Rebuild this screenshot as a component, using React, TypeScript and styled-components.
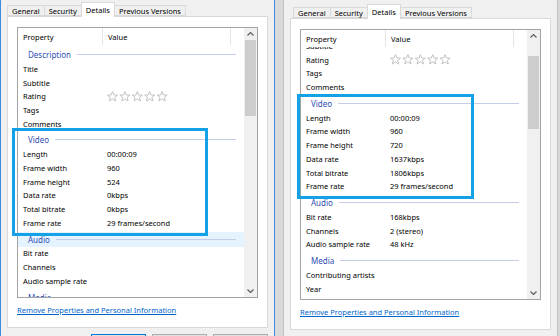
import React from 'react';
import styled, { createGlobalStyle } from 'styled-components';

type Item =
    | { kind: 'group'; label: string; hover?: boolean }
    | { kind: 'row'; name: string; value?: string; stars?: boolean };

interface DialogProps {
    items: Item[];
    edge: string;
    top: number;
    tabInset: number;
    scroll: number;
    thumbTop: number;
    thumbHeight: number;
    callout: { x: number; y: number; w: number; h: number };
}

const row = (name: string, value?: string): Item => ({ kind: 'row', name, value });
const group = (label: string, hover?: boolean): Item => ({ kind: 'group', label, hover });

const leftItems: Item[] = [
    group('Description'),
    row('Title'),
    row('Subtitle'),
    { kind: 'row', name: 'Rating', stars: true },
    row('Tags'),
    row('Comments'),
    group('Video'),
    row('Length', '00:00:09'),
    row('Frame width', '960'),
    row('Frame height', '524'),
    row('Data rate', '0kbps'),
    row('Total bitrate', '0kbps'),
    row('Frame rate', '29 frames/second'),
    group('Audio', true),
    row('Bit rate'),
    row('Channels'),
    row('Audio sample rate'),
    group('Media'),
    row('Contributing artists'),
    row('Year'),
];

const rightItems: Item[] = [
    group('Description'),
    row('Title'),
    row('Subtitle'),
    { kind: 'row', name: 'Rating', stars: true },
    row('Tags'),
    row('Comments'),
    group('Video'),
    row('Length', '00:00:09'),
    row('Frame width', '960'),
    row('Frame height', '720'),
    row('Data rate', '1637kbps'),
    row('Total bitrate', '1806kbps'),
    row('Frame rate', '29 frames/second'),
    group('Audio'),
    row('Bit rate', '168kbps'),
    row('Channels', '2 (stereo)'),
    row('Audio sample rate', '48 kHz'),
    group('Media'),
    row('Contributing artists'),
    row('Year'),
];

const Stars = () => (
    <svg width="62" height="11" viewBox="0 0 62 11">
        {[0, 1, 2, 3, 4].map((i) => (
            <polygon
                key={i}
                transform={`translate(${i * 12.4},0)`}
                points="5.5,0.6 6.9,4 10.5,4.1 7.7,6.4 8.7,10 5.5,7.9 2.3,10 3.3,6.4 0.5,4.1 4.1,4"
                fill="#fff"
                stroke="#b4b4b4"
                strokeWidth="0.8"
            />
        ))}
    </svg>
);

const Chevron: React.FC<{ down?: boolean }> = ({ down }) => (
    <svg width="7" height="4" viewBox="0 0 7 4">
        <polyline
            points={down ? '0.5,0.5 3.5,3.5 6.5,0.5' : '0.5,3.5 3.5,0.5 6.5,3.5'}
            fill="none"
            stroke="#606060"
            strokeWidth="1.2"
        />
    </svg>
);

const Dialog: React.FC<DialogProps> = ({ items, edge, top, tabInset, scroll, thumbTop, thumbHeight, callout }) => {
    return (
        <Window $edge={edge} $top={top}>
            <TabStrip $inset={tabInset}>
                <Tab>General</Tab>
                <Tab>Security</Tab>
                <Tab $active>Details</Tab>
                <Tab>Previous Versions</Tab>
            </TabStrip>
            <Panel>
                <ListBox>
                    <ListMain>
                        <HeaderRow>
                            <HeaderCell $w={85}>Property</HeaderCell>
                            <HeaderCell $w={128}>Value</HeaderCell>
                            <HeaderFill />
                        </HeaderRow>
                        <Viewport>
                            <Content $scroll={scroll}>
                                {items.map((item, i) =>
                                    item.kind === 'group' ? (
                                        <GroupRow key={i} $hover={item.hover}>
                                            <GroupLabel>{item.label}</GroupLabel>
                                            <GroupLine />
                                        </GroupRow>
                                    ) : (
                                        <Row key={i}>
                                            <NameCell>{item.name}</NameCell>
                                            <ValueCell>{item.stars ? <Stars /> : item.value}</ValueCell>
                                        </Row>
                                    )
                                )}
                            </Content>
                        </Viewport>
                    </ListMain>
                    <ScrollBar>
                        <Arrow><Chevron /></Arrow>
                        <Track>
                            <Thumb $top={thumbTop} $h={thumbHeight} />
                        </Track>
                        <Arrow><Chevron down /></Arrow>
                    </ScrollBar>
                </ListBox>
                <Link>Remove Properties and Personal Information</Link>
            </Panel>
            <ButtonRow>
                <DialogButton $primary />
                <DialogButton />
                <DialogButton />
            </ButtonRow>
            <Callout $x={callout.x} $y={callout.y} $w={callout.w} $h={callout.h} />
        </Window>
    );
};

const App: React.FC = () => (
    <>
        <GlobalStyle />
        <Screen>
            <Dialog
                items={leftItems}
                edge="#3d8ee0"
                top={2}
                tabInset={0}
                scroll={0}
                thumbTop={0}
                thumbHeight={76}
                callout={{ x: 11, y: 128, w: 196, h: 108 }}
            />
            <Dialog
                items={rightItems}
                edge="#c2c2c2"
                top={4}
                tabInset={3}
                scroll={38.5}
                thumbTop={14}
                thumbHeight={73}
                callout={{ x: 13, y: 94, w: 177, h: 105 }}
            />
        </Screen>
    </>
);

export default App;

const GlobalStyle = createGlobalStyle`
    html, body {
        margin: 0;
        padding: 0;
        background: #d9d9d9;
    }
    body {
        font-family: "Noto Sans", "Liberation Sans", sans-serif;
        font-size: 7.5px;
        color: #000;
    }
`;

const Screen = styled.div`
    display: flex;
    gap: 8px;
    width: 560px;
    height: 336px;
    overflow: hidden;
`;

const Window = styled.div<{ $edge: string; $top: number }>`
    position: relative;
    flex: none;
    width: 275px;
    box-sizing: border-box;
    background: #f0f0f0;
    border-left: 1px solid ${(p) => p.$edge};
    border-right: 1px solid ${(p) => p.$edge};
    padding: ${(p) => p.$top}px 6px 0;
`;

const TabStrip = styled.div<{ $inset: number }>`
    position: relative;
    z-index: 1;
    display: flex;
    align-items: flex-end;
    height: 14px;
    padding-left: ${(p) => p.$inset}px;
`;

const Tab = styled.div<{ $active?: boolean }>`
    box-sizing: border-box;
    display: flex;
    align-items: center;
    height: ${(p) => (p.$active ? 15 : 11)}px;
    margin-bottom: ${(p) => (p.$active ? -1 : 0)}px;
    margin-right: -1px;
    padding: 0 4px;
    border: 1px solid #d9d9d9;
    border-bottom: ${(p) => (p.$active ? 'none' : '1px solid #d9d9d9')};
    background: ${(p) => (p.$active ? '#fff' : '#f0f0f0')};
    white-space: nowrap;
`;

const Panel = styled.div`
    box-sizing: border-box;
    border: 1px solid #d9d9d9;
    background: #fff;
    padding: 10px 9px;
`;

const ListBox = styled.div`
    display: flex;
    box-sizing: border-box;
    height: 271px;
    border: 1px solid #a3a3a3;
    background: #fff;
`;

const ListMain = styled.div`
    flex: 1;
    min-width: 0;
    display: flex;
    flex-direction: column;
`;

const HeaderRow = styled.div`
    flex: none;
    display: flex;
    height: 17px;
`;

const HeaderCell = styled.div<{ $w: number }>`
    box-sizing: border-box;
    width: ${(p) => p.$w}px;
    display: flex;
    align-items: center;
    padding-left: 5px;
    border-right: 1px solid #e5e5e5;
`;

const HeaderFill = styled.div`
    flex: 1;
`;

const Viewport = styled.div`
    flex: 1;
    overflow: hidden;
`;

const Content = styled.div<{ $scroll: number }>`
    margin-top: -${(p) => p.$scroll}px;
`;

const Row = styled.div`
    display: flex;
    align-items: center;
    height: 13.7px;
    white-space: nowrap;
`;

const NameCell = styled.div`
    box-sizing: border-box;
    width: 84px;
    padding-left: 5px;
`;

const ValueCell = styled.div`
    display: flex;
    align-items: center;
    padding-left: 5px;
`;

const GroupRow = styled.div<{ $hover?: boolean }>`
    display: flex;
    align-items: center;
    margin-top: 2px;
    height: 15px;
    padding-left: 10px;
    background: ${(p) => (p.$hover ? '#e5f3ff' : 'transparent')};
`;

const GroupLabel = styled.span`
    color: #2f4db5;
    font-size: 8px;
`;

const GroupLine = styled.div`
    flex: 1;
    height: 1px;
    margin: 0 8px 0 6px;
    background: #c5cde8;
`;

const ScrollBar = styled.div`
    flex: none;
    width: 13px;
    display: flex;
    flex-direction: column;
    background: #f0f0f0;
`;

const Arrow = styled.div`
    flex: none;
    height: 12px;
    display: flex;
    align-items: center;
    justify-content: center;
`;

const Track = styled.div`
    flex: 1;
`;

const Thumb = styled.div<{ $top: number; $h: number }>`
    margin: ${(p) => p.$top}px 1px 0;
    height: ${(p) => p.$h}px;
    background: #cdcdcd;
`;

const Link = styled.a`
    display: block;
    margin-top: 6px;
    line-height: 13px;
    color: #0066cc;
    text-decoration: underline;
    cursor: pointer;
`;

const ButtonRow = styled.div`
    display: flex;
    justify-content: flex-end;
    gap: 6px;
    margin-top: 6px;
`;

const DialogButton = styled.div<{ $primary?: boolean }>`
    box-sizing: border-box;
    width: 55px;
    height: 23px;
    border: 1px solid ${(p) => (p.$primary ? '#0078d7' : '#adadad')};
    background: #e1e1e1;
`;

const Callout = styled.div<{ $x: number; $y: number; $w: number; $h: number }>`
    position: absolute;
    left: ${(p) => p.$x}px;
    top: ${(p) => p.$y}px;
    width: ${(p) => p.$w}px;
    height: ${(p) => p.$h}px;
    box-sizing: border-box;
    border: 3px solid #14a2e6;
    pointer-events: none;
`;
